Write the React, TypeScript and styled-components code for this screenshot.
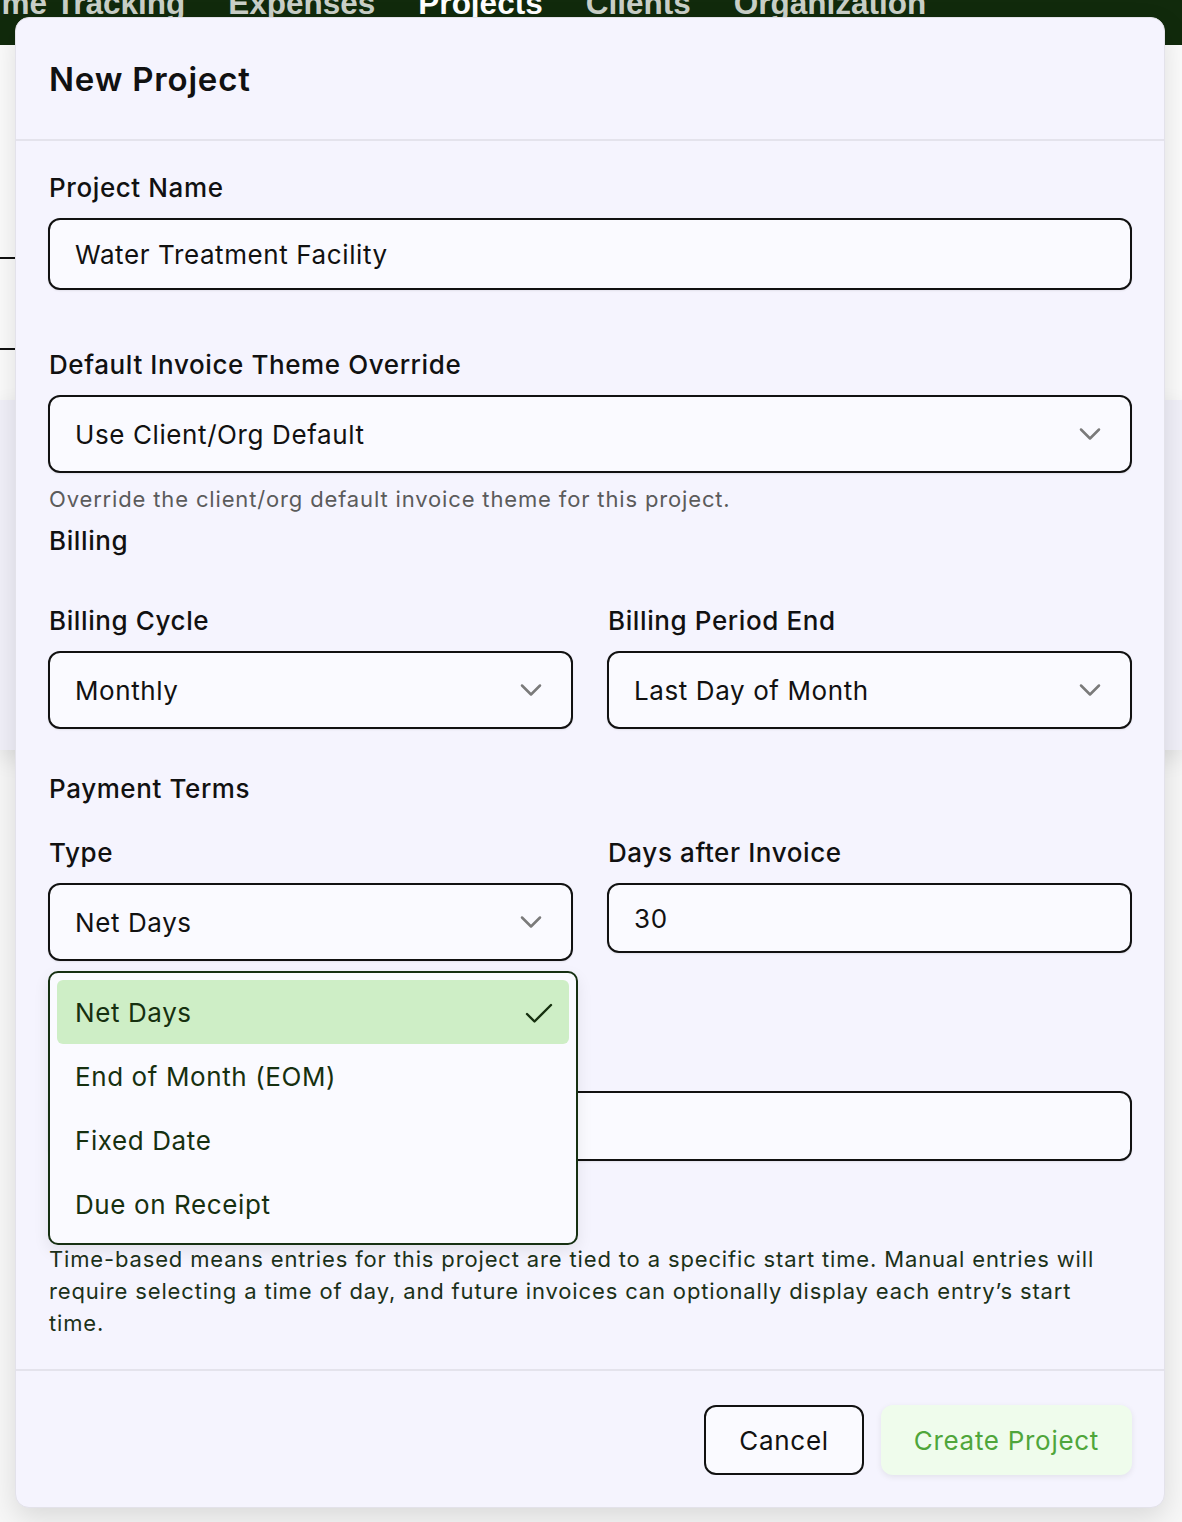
import React, { useState } from "react";
import styled, { createGlobalStyle } from "styled-components";
import { Check, ChevronDown } from "lucide-react";

const GlobalStyle = createGlobalStyle`
  html, body {
    margin: 0;
    padding: 0;
  }
  body {
    font-family: Inter, "Noto Sans", sans-serif;
    background: #f7f7f7;
    color: #111;
  }
  * {
    box-sizing: border-box;
  }
`;

const Page = styled.div`
  position: relative;
  width: 1182px;
  height: 1522px;
  overflow: hidden;
  background: #f7f7f7;
`;

const TopNav = styled.nav`
  height: 45px;
  background: #112a0c;
  overflow: hidden;
`;

const NavList = styled.div`
  display: flex;
  gap: 43px;
  margin-left: -26px;
  margin-top: -12px;
`;

const NavLink = styled.a<{ $active?: boolean }>`
  font-family: "Liberation Sans", Arial, sans-serif;
  font-weight: 700;
  font-size: 31.5px;
  line-height: 31px;
  white-space: nowrap;
  color: ${(p) => (p.$active ? "#ffffff" : "#c9cfc7")};
`;

const ListArea = styled.section`
  height: 355px;
  background: #fbfbfb;
  padding-top: 212px;
`;

const Rule = styled.div<{ $offset?: number }>`
  height: 2px;
  width: 1100px;
  background: #111;
  margin-top: ${(p) => p.$offset ?? 0}px;
`;

const SummaryPanel = styled.section`
  height: 350px;
  background: #f1f0f9;
  box-shadow: 0 8px 22px rgba(0, 0, 0, 0.1);
`;

/* modal */

const Overlay = styled.div`
  position: absolute;
  inset: 0;
  padding: 17px 0 0 15px;
`;

const Modal = styled.div`
  width: 1150px;
  background: #f5f4fe;
  border: 1px solid #e3e2ea;
  border-radius: 14px;
  box-shadow: 0 10px 28px rgba(0, 0, 0, 0.12);
  letter-spacing: 0.6px;
`;

const ModalHeader = styled.header`
  height: 123px;
  display: flex;
  align-items: center;
  padding: 0 33px;
  border-bottom: 2px solid #e4e3ec;
`;

const Title = styled.h2`
  margin: 0;
  font-size: 33px;
  font-weight: 600;
  letter-spacing: 0.8px;
  color: #111;
`;

const ModalBody = styled.div`
  padding: 29px 32px 30px;
`;

const Field = styled.div<{ $top?: number }>`
  position: relative;
  margin-top: ${(p) => p.$top ?? 0}px;
`;

const Label = styled.label`
  display: block;
  font-size: 26px;
  font-weight: 500;
  line-height: 36px;
  margin-bottom: 12px;
  padding-left: 1px;
  color: #111;
`;

const SectionTitle = styled.h3<{ $top: number }>`
  margin: ${(p) => p.$top}px 0 0;
  font-size: 26px;
  font-weight: 500;
  line-height: 36px;
  padding-left: 1px;
  color: #111;
`;

const TextInput = styled.input<{ $tall?: boolean }>`
  display: block;
  width: 100%;
  height: ${(p) => (p.$tall ? 72 : 70)}px;
  padding: 0 25px;
  border: 2px solid #111;
  border-radius: 12px;
  background: #fafaff;
  font-family: inherit;
  font-size: 26px;
  letter-spacing: 0.6px;
  color: #111;
  outline: none;
  box-shadow: 0 1px 2px rgba(0, 0, 0, 0.08);
`;

const SelectButton = styled.button`
  display: flex;
  align-items: center;
  justify-content: space-between;
  width: 100%;
  height: 78px;
  padding: 0 22px 0 25px;
  border: 2px solid #111;
  border-radius: 12px;
  background: #fafaff;
  font-family: inherit;
  font-size: 26px;
  letter-spacing: 0.6px;
  color: #111;
  cursor: pointer;
  box-shadow: 0 1px 2px rgba(0, 0, 0, 0.08);
  svg {
    color: #7a7a7a;
  }
`;

const Hint = styled.p<{ $top: number; $tone?: "muted" | "dark" }>`
  margin: ${(p) => p.$top}px 0 0;
  padding-left: 1px;
  font-size: 22px;
  line-height: 32px;
  letter-spacing: 0.85px;
  color: ${(p) => (p.$tone === "dark" ? "#1b3118" : "#5b5b5b")};
`;

const TwoCol = styled.div<{ $top: number }>`
  display: grid;
  grid-template-columns: 1fr 1fr;
  column-gap: 34px;
  align-items: start;
  margin-top: ${(p) => p.$top}px;
`;

const Menu = styled.ul`
  position: absolute;
  top: calc(100% + 10px);
  left: 0;
  width: 530px;
  margin: 0;
  padding: 7px;
  list-style: none;
  background: #fafaff;
  border: 2px solid #163012;
  border-radius: 10px;
  box-shadow: 0 6px 16px rgba(0, 0, 0, 0.08);
  z-index: 10;
`;

const MenuItem = styled.li<{ $selected?: boolean }>`
  display: flex;
  align-items: center;
  justify-content: space-between;
  height: 64px;
  padding: 0 12px 0 18px;
  border-radius: 6px;
  font-size: 26px;
  color: #16300f;
  background: ${(p) => (p.$selected ? "#ceeec6" : "transparent")};
  cursor: pointer;
  svg {
    color: #16300f;
    margin-top: 4px;
  }
`;

const ModalFooter = styled.footer`
  display: flex;
  justify-content: flex-end;
  gap: 17px;
  padding: 34px 32px 32px;
  border-top: 2px solid #e4e3ec;
`;

const Button = styled.button<{ $variant?: "primary" }>`
  height: 70px;
  padding: 0 33px;
  border-radius: 12px;
  font-family: inherit;
  font-size: 26px;
  letter-spacing: 0.7px;
  cursor: pointer;
  border: ${(p) => (p.$variant === "primary" ? "none" : "2px solid #111")};
  background: ${(p) => (p.$variant === "primary" ? "#effcec" : "#fafaff")};
  color: ${(p) => (p.$variant === "primary" ? "#4fa63b" : "#111")};
  box-shadow: ${(p) =>
    p.$variant === "primary" ? "0 2px 6px rgba(0, 0, 0, 0.08)" : "none"};
`;

const termTypes = ["Net Days", "End of Month (EOM)", "Fixed Date", "Due on Receipt"];

const Select = ({ value, onClick }: { value: string; onClick?: () => void }) => (
  <SelectButton type="button" onClick={onClick}>
    <span>{value}</span>
    <ChevronDown size={36} strokeWidth={1.7} />
  </SelectButton>
);

const App = () => {
  const [termType, setTermType] = useState("Net Days");
  const [menuOpen, setMenuOpen] = useState(true);

  return (
    <>
      <GlobalStyle />
      <Page>
        <TopNav>
          <NavList>
            <NavLink>Time Tracking</NavLink>
            <NavLink>Expenses</NavLink>
            <NavLink $active>Projects</NavLink>
            <NavLink>Clients</NavLink>
            <NavLink>Organization</NavLink>
          </NavList>
        </TopNav>
        <ListArea>
          <Rule />
          <Rule $offset={89} />
        </ListArea>
        <SummaryPanel />

        <Overlay>
          <Modal>
            <ModalHeader>
              <Title>New Project</Title>
            </ModalHeader>
            <ModalBody>
              <Field>
                <Label>Project Name</Label>
                <TextInput $tall defaultValue="Water Treatment Facility" />
              </Field>

              <Field $top={57}>
                <Label>Default Invoice Theme Override</Label>
                <Select value="Use Client/Org Default" />
              </Field>
              <Hint $top={10}>Override the client/org default invoice theme for this project.</Hint>

              <SectionTitle $top={8}>Billing</SectionTitle>
              <TwoCol $top={44}>
                <Field>
                  <Label>Billing Cycle</Label>
                  <Select value="Monthly" />
                </Field>
                <Field>
                  <Label>Billing Period End</Label>
                  <Select value="Last Day of Month" />
                </Field>
              </TwoCol>

              <SectionTitle $top={42}>Payment Terms</SectionTitle>
              <TwoCol $top={28}>
                <Field>
                  <Label>Type</Label>
                  <Select value={termType} onClick={() => setMenuOpen(!menuOpen)} />
                  {menuOpen && (
                    <Menu>
                      {termTypes.map((t) => (
                        <MenuItem
                          key={t}
                          $selected={t === termType}
                          onClick={() => {
                            setTermType(t);
                            setMenuOpen(false);
                          }}
                        >
                          {t}
                          {t === termType && <Check size={36} strokeWidth={1.6} />}
                        </MenuItem>
                      ))}
                    </Menu>
                  )}
                </Field>
                <Field>
                  <Label>Days after Invoice</Label>
                  <TextInput defaultValue="30" />
                </Field>
              </TwoCol>

              {/* start-time field, sits under the open type menu */}
              <Field $top={130}>
                <TextInput aria-label="Start time" />
              </Field>
              <Hint $top={82} $tone="dark">
                Time-based means entries for this project are tied to a specific start time. Manual
                entries will require selecting a time of day, and future invoices can optionally
                display each entry’s start time.
              </Hint>
            </ModalBody>
            <ModalFooter>
              <Button>Cancel</Button>
              <Button $variant="primary">Create Project</Button>
            </ModalFooter>
          </Modal>
        </Overlay>
      </Page>
    </>
  );
};

export default App;
